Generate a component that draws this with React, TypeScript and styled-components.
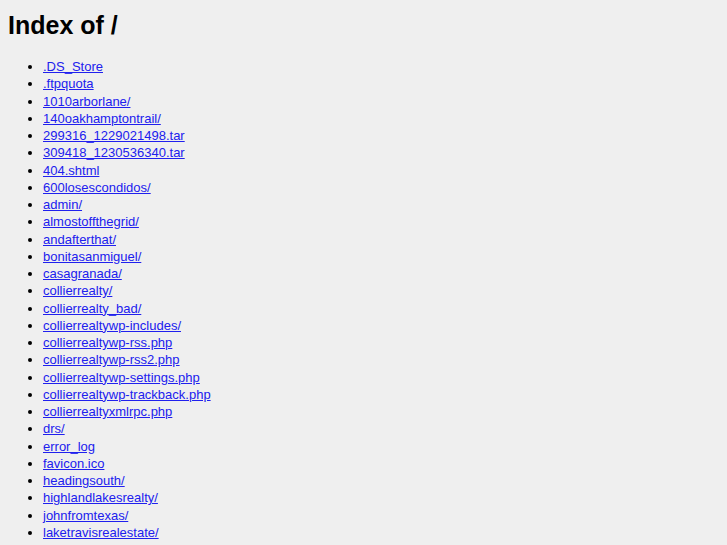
import React from 'react';
import styled, { createGlobalStyle } from 'styled-components';

const GlobalStyle = createGlobalStyle`
    html, body {
        margin: 0;
        background: #efefef;
    }
    body {
        padding: 8px;
        font-family: "Liberation Sans", Arial, sans-serif;
        color: #000;
    }
`;

const Title = styled.h1`
    margin: 0 0 19px 0;
    padding-top: 3px;
    font-size: 25px;
    line-height: 28px;
    font-weight: bold;
`;

const List = styled.ul`
    margin: 0;
    padding-left: 35px;
    font-size: 13px;
    line-height: 17.25px;
`;

const Item = styled.li`
    list-style: disc;
    height: 17.25px;
`;

const FileLink = styled.a`
    color: #2020ee;
    text-decoration: underline;
`;

const files = [
    '.DS_Store',
    '.ftpquota',
    '1010arborlane/',
    '140oakhamptontrail/',
    '299316_1229021498.tar',
    '309418_1230536340.tar',
    '404.shtml',
    '600losescondidos/',
    'admin/',
    'almostoffthegrid/',
    'andafterthat/',
    'bonitasanmiguel/',
    'casagranada/',
    'collierrealty/',
    'collierrealty_bad/',
    'collierrealtywp-includes/',
    'collierrealtywp-rss.php',
    'collierrealtywp-rss2.php',
    'collierrealtywp-settings.php',
    'collierrealtywp-trackback.php',
    'collierrealtyxmlrpc.php',
    'drs/',
    'error_log',
    'favicon.ico',
    'headingsouth/',
    'highlandlakesrealty/',
    'johnfromtexas/',
    'laketravisrealestate/',
];

//------------------Component------------------
const App = () => {
    return (
        <>
            <GlobalStyle />
            <Title>Index of /</Title>
            <List>
                {files.map((f) => (
                    <Item key={f}>
                        <FileLink href={f}>{f}</FileLink>
                    </Item>
                ))}
            </List>
        </>
    );
};

export default App;
